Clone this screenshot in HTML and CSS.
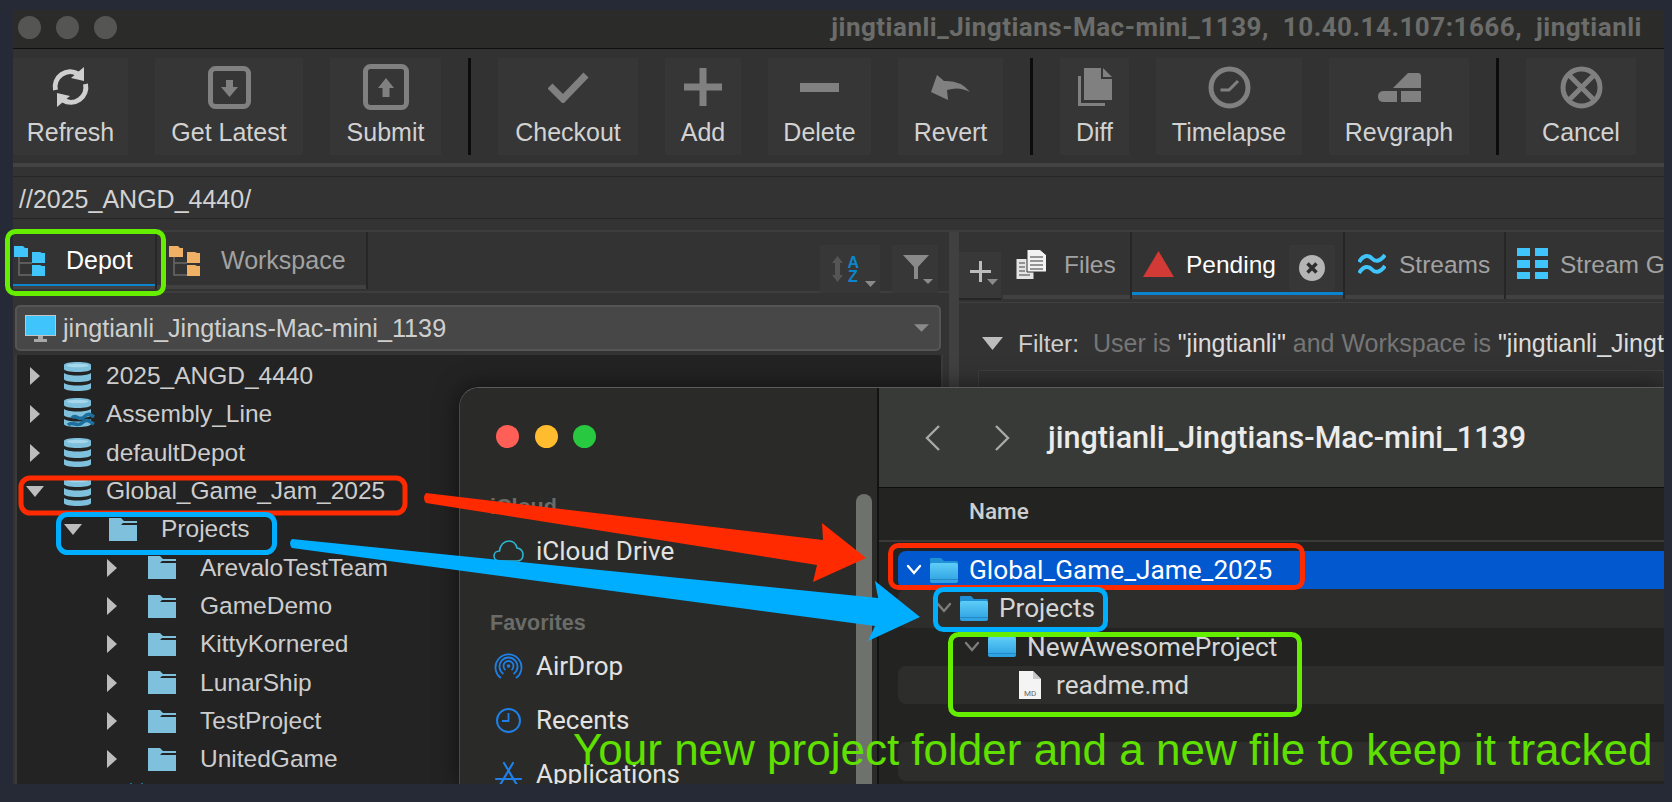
FILE: index.html
```html
<!DOCTYPE html>
<html lang="en">
<head>
    <meta charset="UTF-8">
    <title>Helix Visual Client and Finder</title>
    <link rel="stylesheet" href="styles.css">
</head>
<body>

<svg class="sprite" aria-hidden="true">
    <defs>
        <linearGradient id="macfolder" x1="0" y1="0" x2="0" y2="1">
            <stop offset="0" stop-color="#5fcdf8"/>
            <stop offset="1" stop-color="#2a9fe0"/>
        </linearGradient>
    </defs>
    <symbol id="folder" viewBox="0 0 28 23">
        <path fill="#7fc0dc" d="M0 0H12L15 3H28V5H14L12 7H28V23H0Z"/>
    </symbol>
    <symbol id="macfolder-icon" viewBox="0 0 28 25">
        <path fill="#1f8fd6" d="M1 0H11L14 3H27Q28 3 28 5V8H0V1Q0 0 1 0Z"/>
        <rect y="5" width="28" height="20" rx="2" fill="url(#macfolder)"/>
        <rect y="21" width="28" height="1" fill="#2488c8"/>
    </symbol>
    <symbol id="db" viewBox="0 0 27 29">
        <g fill="#7fc0dc">
            <path d="M0 3C0 1 6 0 13.500 0S27 1 27 3V7C27 9 21 10 13.500 10S0 9 0 7Z"/>
            <path d="M0 11C3 13 9 13.500 13.500 13.500S24 13 27 11V17C27 19 21 20 13.500 20S0 19 0 17Z"/>
            <path d="M0 21C3 23 9 23.500 13.500 23.500S24 23 27 21V26C27 28 21 29 13.500 29S0 28 0 26Z"/>
        </g>
        <ellipse cx="13.500" cy="3.500" rx="11" ry="1.800" fill="#a5d8ec"/>
    </symbol>
    <symbol id="treetab" viewBox="0 0 31 30">
        <path d="M5 10V29H18M5 17H18" fill="none" stroke="#6a6a6a" stroke-width="1.500"/>
        <path fill="currentColor" d="M0 0H9L11 2H14V11H0Z"/>
        <path fill="currentColor" d="M18 6H26L28 7H31V17H18Z"/>
        <path fill="currentColor" d="M18 19H26L28 20H31V30H18Z"/>
    </symbol>
    <symbol id="tri-right" viewBox="0 0 10 18"><path fill="#bdbdbd" d="M0 0L10 9L0 18Z"/></symbol>
    <symbol id="tri-down" viewBox="0 0 18 11"><path fill="#bdbdbd" d="M0 0H18L9 11Z"/></symbol>
    <symbol id="tri-small" viewBox="0 0 12 6"><path fill="#8a8a8a" d="M0 0H12L6 6Z"/></symbol>
    <symbol id="chev" viewBox="0 0 16 12"><path d="M2 2L8 9L14 2" fill="none" stroke="currentColor" stroke-width="2.400" stroke-linecap="round"/></symbol>
</svg>

<div class="stage">
<div class="window">
    <div class="titlebar">
        <span class="dot"></span><span class="dot"></span><span class="dot"></span>
        <span class="title">jingtianli_Jingtians-Mac-mini_1139,  10.40.14.107:1666,  jingtianli</span>
    </div>

    <div class="toolbar">
        <div class="tool tool-refresh">
            <span class="tool-icon">
                <svg width="39" height="42" viewBox="0 0 39 42">
                    <g fill="none" stroke="#cfcfcf" stroke-width="5">
                        <path d="M4.500 24A15 15 0 0 1 27 8"/>
                        <path d="M34.500 18A15 15 0 0 1 12 34"/>
                    </g>
                    <path fill="#cfcfcf" d="M33 1L33 15L20 12Z"/>
                    <path fill="#cfcfcf" d="M6 41L6 27L19 30Z"/>
                </svg>
            </span>
            <span class="tool-label">Refresh</span>
        </div>
        <div class="tool tool-latest">
            <span class="tool-icon">
                <svg width="43" height="43" viewBox="0 0 43 43">
                    <rect x="2.500" y="2.500" width="38" height="38" rx="5" fill="none" stroke="#808080" stroke-width="5"/>
                    <path fill="#808080" d="M18 14H25V21H30L21.500 31L13 21H18Z"/>
                </svg>
            </span>
            <span class="tool-label">Get Latest</span>
        </div>
        <div class="tool tool-submit">
            <span class="tool-icon">
                <svg width="46" height="46" viewBox="0 0 46 46">
                    <rect x="2.500" y="2.500" width="41" height="41" rx="5" fill="none" stroke="#808080" stroke-width="5"/>
                    <path fill="#808080" d="M19.500 33H26.500V24H31L23 14L15 24H19.500Z"/>
                </svg>
            </span>
            <span class="tool-label">Submit</span>
        </div>
        <span class="tool-sep"></span>
        <div class="tool tool-checkout">
            <span class="tool-icon">
                <svg width="41" height="31" viewBox="0 0 41 31"><path d="M2 14L15 27L38 3" fill="none" stroke="#808080" stroke-width="7"/></svg>
            </span>
            <span class="tool-label">Checkout</span>
        </div>
        <div class="tool tool-add">
            <span class="tool-icon">
                <svg width="38" height="38" viewBox="0 0 38 38"><path fill="#808080" d="M15.500 0H22.500V15.500H38V22.500H22.500V38H15.500V22.500H0V15.500H15.500Z"/></svg>
            </span>
            <span class="tool-label">Add</span>
        </div>
        <div class="tool tool-delete">
            <span class="tool-icon">
                <svg width="39" height="9" viewBox="0 0 39 9"><rect width="39" height="9" fill="#808080"/></svg>
            </span>
            <span class="tool-label">Delete</span>
        </div>
        <div class="tool tool-revert">
            <span class="tool-icon">
                <svg width="39" height="25" viewBox="0 0 39 25"><path fill="#808080" d="M6 0L0 17L17 25L16 15Q28 11 39 17Q30 5 13 6Z"/></svg>
            </span>
            <span class="tool-label">Revert</span>
        </div>
        <span class="tool-sep"></span>
        <div class="tool tool-diff">
            <span class="tool-icon">
                <svg width="34" height="38" viewBox="0 0 34 38">
                    <path fill="#808080" d="M6 0H23V11H34V32H6Z"/>
                    <path fill="#808080" d="M25 0L34 9H25Z"/>
                    <path fill="#808080" d="M0 8H3V35H27V38H0Z"/>
                </svg>
            </span>
            <span class="tool-label">Diff</span>
        </div>
        <div class="tool tool-timelapse">
            <span class="tool-icon">
                <svg width="43" height="43" viewBox="0 0 43 43">
                    <circle cx="21.500" cy="21.500" r="18.500" fill="none" stroke="#808080" stroke-width="5"/>
                    <path d="M12.500 24H21L30 15" fill="none" stroke="#808080" stroke-width="3"/>
                </svg>
            </span>
            <span class="tool-label">Timelapse</span>
        </div>
        <div class="tool tool-revgraph">
            <span class="tool-icon">
                <svg width="43" height="29" viewBox="0 0 43 29">
                    <path fill="#808080" d="M30 0H40Q43 0 43 3V15H15Z"/>
                    <path fill="#808080" d="M6 18H19V29H6Q0 29 0 23.500T6 18Z"/>
                    <rect x="23" y="18" width="20" height="11" fill="#808080"/>
                </svg>
            </span>
            <span class="tool-label">Revgraph</span>
        </div>
        <span class="tool-sep"></span>
        <div class="tool tool-cancel">
            <span class="tool-icon">
                <svg width="43" height="43" viewBox="0 0 43 43">
                    <circle cx="21.500" cy="21.500" r="18.500" fill="none" stroke="#808080" stroke-width="5"/>
                    <path d="M10 10L33 33M33 10L10 33" stroke="#808080" stroke-width="5"/>
                </svg>
            </span>
            <span class="tool-label">Cancel</span>
        </div>
    </div>

    <div class="grip"></div>
    <div class="pathbar">//2025_ANGD_4440/</div>

    <div class="panes">
        <div class="left-pane">
            <div class="left-tabs">
                <div class="ltab ltab-active">
                    <svg class="ltab-icon depot-blue" width="31" height="30"><use href="#treetab"/></svg>
                    <span>Depot</span>
                </div>
                <div class="ltab">
                    <svg class="ltab-icon ws-orange" width="31" height="30"><use href="#treetab"/></svg>
                    <span>Workspace</span>
                </div>
                <div class="sort-btn">
                    <svg width="44" height="34" viewBox="0 0 44 34">
                        <path fill="#555" d="M5.500 2L11 9H8V21H11L5.500 28L0 21H3V9H0Z"/>
                        <text x="15.500" y="14" class="az">A</text>
                        <text x="16" y="28" class="az">Z</text>
                        <path fill="#8a8a8a" d="M33 27H44L38.500 33Z"/>
                    </svg>
                </div>
                <div class="filter-btn">
                    <svg width="30" height="30" viewBox="0 0 30 30">
                        <path fill="#8a8a8a" d="M0 0H26L15 12V24H11V12Z"/>
                        <path fill="#8a8a8a" d="M20 24H30L25 29Z"/>
                    </svg>
                </div>
            </div>

            <div class="combo">
                <svg width="31" height="27" viewBox="0 0 31 27">
                    <rect x="0.500" y="0.500" width="30" height="20" fill="#3fc4fb" stroke="#c4c4c4"/>
                    <path fill="#a8a8a8" d="M13 21H18V24H22V27H9V24H13Z"/>
                </svg>
                <span class="combo-text">jingtianli_Jingtians-Mac-mini_1139</span>
                <svg class="combo-arrow" width="15" height="8"><use href="#tri-small"/></svg>
            </div>

            <div class="tree">
                <div class="tree-row depot-row">
                    <svg class="tree-arrow" width="10" height="18"><use href="#tri-right"/></svg>
                    <svg class="tree-icon" width="27" height="29"><use href="#db"/></svg>
                    <span>2025_ANGD_4440</span>
                </div>
                <div class="tree-row depot-row">
                    <svg class="tree-arrow" width="10" height="18"><use href="#tri-right"/></svg>
                    <svg class="tree-icon" width="31" height="32" viewBox="0 0 31 32">
                        <use href="#db" width="27" height="29"/>
                        <path d="M8 20C12 15 15 24 20 19S27 17 30 19M4 27C9 22 13 30 18 25S26 24 30 26" fill="none" stroke="#1d6f9e" stroke-width="3.500"/>
                    </svg>
                    <span class="after-wide">Assembly_Line</span>
                </div>
                <div class="tree-row depot-row">
                    <svg class="tree-arrow" width="10" height="18"><use href="#tri-right"/></svg>
                    <svg class="tree-icon" width="27" height="29"><use href="#db"/></svg>
                    <span>defaultDepot</span>
                </div>
                <div class="tree-row depot-row open">
                    <svg class="tree-arrow" width="18" height="11"><use href="#tri-down"/></svg>
                    <svg class="tree-icon" width="27" height="29"><use href="#db"/></svg>
                    <span>Global_Game_Jam_2025</span>
                </div>
                <div class="tree-row folder-row open level-2">
                    <svg class="tree-arrow" width="18" height="11"><use href="#tri-down"/></svg>
                    <svg class="tree-icon" width="28" height="23"><use href="#folder"/></svg>
                    <span>Projects</span>
                </div>
                <div class="tree-row folder-row level-3">
                    <svg class="tree-arrow" width="10" height="18"><use href="#tri-right"/></svg>
                    <svg class="tree-icon" width="28" height="23"><use href="#folder"/></svg>
                    <span>ArevaloTestTeam</span>
                </div>
                <div class="tree-row folder-row level-3">
                    <svg class="tree-arrow" width="10" height="18"><use href="#tri-right"/></svg>
                    <svg class="tree-icon" width="28" height="23"><use href="#folder"/></svg>
                    <span>GameDemo</span>
                </div>
                <div class="tree-row folder-row level-3">
                    <svg class="tree-arrow" width="10" height="18"><use href="#tri-right"/></svg>
                    <svg class="tree-icon" width="28" height="23"><use href="#folder"/></svg>
                    <span>KittyKornered</span>
                </div>
                <div class="tree-row folder-row level-3">
                    <svg class="tree-arrow" width="10" height="18"><use href="#tri-right"/></svg>
                    <svg class="tree-icon" width="28" height="23"><use href="#folder"/></svg>
                    <span>LunarShip</span>
                </div>
                <div class="tree-row folder-row level-3">
                    <svg class="tree-arrow" width="10" height="18"><use href="#tri-right"/></svg>
                    <svg class="tree-icon" width="28" height="23"><use href="#folder"/></svg>
                    <span>TestProject</span>
                </div>
                <div class="tree-row folder-row level-3">
                    <svg class="tree-arrow" width="10" height="18"><use href="#tri-right"/></svg>
                    <svg class="tree-icon" width="28" height="23"><use href="#folder"/></svg>
                    <span>UnitedGame</span>
                </div>
                <div class="tree-stub">
                    <svg width="15" height="3"><path d="M1 0V3M12 0V3" stroke="#1d6f9e" stroke-width="2"/></svg>
                </div>
            </div>
        </div>

        <div class="splitter"></div>

        <div class="right-pane">
            <div class="right-tabs">
                <div class="plus-tab">
                    <svg width="28" height="24" viewBox="0 0 28 24">
                        <path fill="#bcbcbc" d="M9 0H12V9H21V12H12V21H9V12H0V9H9Z"/>
                        <path fill="#8a8a8a" d="M17 18H28L22.500 24Z"/>
                    </svg>
                </div>
                <div class="rtab rtab-files">
                    <svg width="31" height="30" viewBox="0 0 31 30">
                        <rect x="0.500" y="10" width="17" height="20" fill="#e4e4e4"/>
                        <path fill="#f2f2f2" stroke="#333" d="M11 0.500H24L30.500 6V23H11Z"/>
                        <path d="M14 8H27M14 12H27M14 16H27M14 20H27M3 14H9M3 18H9M3 22H9M3 26H14" stroke="#777" stroke-width="1.500"/>
                    </svg>
                    <span class="rtab-text">Files</span>
                </div>
                <div class="rtab rtab-pending">
                    <svg width="31" height="26" viewBox="0 0 31 26"><path fill="#d13a35" d="M15.500 0L31 26H0Z"/></svg>
                    <span class="rtab-text">Pending</span>
                    <span class="close-box">
                        <svg width="26" height="26" viewBox="0 0 26 26">
                            <circle cx="13" cy="13" r="13" fill="#b5b5b5"/>
                            <path d="M8.500 8.500L17.500 17.500M17.500 8.500L8.500 17.500" stroke="#2e2e2e" stroke-width="3.500"/>
                        </svg>
                    </span>
                </div>
                <div class="rtab rtab-streams">
                    <svg width="28" height="22" viewBox="0 0 28 22">
                        <path d="M1 9C6 1 11 2 14 5.500S22 9 27 2M1 20C6 12 11 13 14 16.500S22 20 27 13" fill="none" stroke="#3fc4fb" stroke-width="4"/>
                    </svg>
                    <span class="rtab-text">Streams</span>
                </div>
                <div class="rtab rtab-graph">
                    <svg width="31" height="31" viewBox="0 0 31 31">
                        <g fill="#3fc4fb">
                            <rect width="13" height="8"/><rect x="18" width="13" height="8"/>
                            <rect y="12" width="13" height="8"/><rect x="18" y="12" width="13" height="8"/>
                            <rect y="24" width="13" height="7"/><rect x="18" y="24" width="13" height="7"/>
                        </g>
                    </svg>
                    <span class="rtab-text">Stream Graph</span>
                </div>
            </div>
            <div class="filter-row">
                <svg width="21" height="13"><use href="#tri-down"/></svg>
                <span class="filter-label">Filter:</span>
                <span class="filter-value">User is <b>"jingtianli"</b> and Workspace is <b>"jingtianli_Jingtians-Mac-mini_1139"</b></span>
            </div>
            <div class="changes-box"></div>
        </div>
    </div>

    <div class="finder">
        <div class="sidebar">
            <div class="lights">
                <span class="light light-red"></span><span class="light light-yellow"></span><span class="light light-green"></span>
            </div>
            <div class="side-head side-head-icloud">iCloud</div>
            <div class="side-item">
                <svg width="31" height="22" viewBox="0 0 31 22">
                    <path d="M7 21C3 21 1 18.500 1 16C1 13 3.500 11 6.500 11C7 5 11 1 16 1C20 1 23 4 24 8C27.500 8.500 30 11 30 15C30 18.500 27.500 21 24 21Z" fill="none" stroke="#2db5d5" stroke-width="1.600"/>
                </svg>
                <span>iCloud Drive</span>
            </div>
            <div class="side-head side-head-fav">Favorites</div>
            <div class="side-item">
                <svg width="31" height="26" viewBox="0 0 31 26">
                    <g fill="none" stroke="#1f7fe6" stroke-width="1.800">
                        <path d="M8 25A13 13 0 1 1 23 25"/>
                        <path d="M10.500 21A9 9 0 1 1 20.500 21"/>
                        <path d="M12.500 17A5 5 0 1 1 18.500 17"/>
                    </g>
                    <circle cx="15.500" cy="13" r="1.800" fill="#1f7fe6"/>
                </svg>
                <span>AirDrop</span>
            </div>
            <div class="side-item">
                <svg width="31" height="25" viewBox="0 0 31 25">
                    <circle cx="15.500" cy="12.500" r="11.500" fill="none" stroke="#1f7fe6" stroke-width="2"/>
                    <path d="M15.500 5V13H9" fill="none" stroke="#1f7fe6" stroke-width="1.800"/>
                </svg>
                <span>Recents</span>
            </div>
            <div class="side-item">
                <svg width="31" height="26" viewBox="0 0 31 26">
                    <path d="M11 2L24 24M20 2L7 24M3 18H28" fill="none" stroke="#1f7fe6" stroke-width="2.200" stroke-linecap="round"/>
                </svg>
                <span>Applications</span>
            </div>
            <div class="side-scroll"></div>
        </div>
        <div class="finder-main">
            <div class="finder-toolbar">
                <svg width="16" height="26" viewBox="0 0 16 26"><path d="M14 1L2 13L14 25" fill="none" stroke="#a8a8a8" stroke-width="2.400"/></svg>
                <svg class="nav-forward" width="16" height="26" viewBox="0 0 16 26"><path d="M2 1L14 13L2 25" fill="none" stroke="#a8a8a8" stroke-width="2.400"/></svg>
                <span class="finder-title">jingtianli_Jingtians-Mac-mini_1139</span>
            </div>
            <div class="finder-head">Name</div>
            <div class="file-list">
                <div class="file-row file-selected indent-1">
                    <svg class="file-chev chev-white" width="16" height="12"><use href="#chev"/></svg>
                    <svg class="file-icon" width="28" height="25"><use href="#macfolder-icon"/></svg>
                    <span>Global_Game_Jame_2025</span>
                </div>
                <div class="file-row file-alt indent-2">
                    <svg class="file-chev" width="16" height="12"><use href="#chev"/></svg>
                    <svg class="file-icon" width="28" height="25"><use href="#macfolder-icon"/></svg>
                    <span>Projects</span>
                </div>
                <div class="file-row indent-3">
                    <svg class="file-chev" width="16" height="12"><use href="#chev"/></svg>
                    <svg class="file-icon" width="28" height="21" viewBox="0 0 28 21" preserveAspectRatio="none"><use href="#macfolder-icon" width="28" height="25" y="-4"/></svg>
                    <span>NewAwesomeProject</span>
                </div>
                <div class="file-row file-alt indent-4">
                    <svg class="doc-icon" width="22" height="28" viewBox="0 0 22 28">
                        <path fill="#f4f4f4" d="M0 0H14L22 8V28H0Z"/>
                        <path fill="#c8c8c8" d="M14 0L22 8H14Z"/>
                        <text x="5" y="25" class="doc-tag">MD</text>
                    </svg>
                    <span>readme.md</span>
                </div>
                <div class="file-row"></div>
                <div class="file-row file-alt"></div>
            </div>
        </div>
    </div>
</div>

    <svg class="marks" viewBox="13 10 1651 774">
        <rect x="21" y="478" width="384" height="35" rx="9" class="mark-red"/>
        <rect x="58.500" y="514.500" width="216" height="38" rx="9" class="mark-blue"/>
        <rect x="7.500" y="231.500" width="156" height="62" rx="8" class="mark-green"/>
        <rect x="890.500" y="545.500" width="412" height="42" rx="8" class="mark-red"/>
        <rect x="935.500" y="589.500" width="170" height="40" rx="8" class="mark-blue"/>
        <rect x="950.500" y="634.500" width="349" height="80" rx="8" class="mark-green"/>
        <path fill="#ff2a00" d="M426 493L823 540L822 523L866 558L813 582L817 565L426 503Q422 498 426 493Z"/>
        <path fill="#00aeff" d="M292 539L878 598L875 581L920 617L868 641L875 626L292 548Q288 543 292 539Z"/>
    </svg>
    <div class="note">Your new project folder and a new file to keep it tracked</div>
</div>

</body>
</html>
```

FILE: styles.css
```css
* {
    box-sizing: border-box;
}
html, body {
    height: 100%;
}
body {
    margin: 0;
    padding: 10px 8px 18px 13px;
    background: #252a36;
    font-family: "Liberation Sans", Arial, sans-serif;
    overflow: hidden;
}
.sprite {
    position: absolute;
    width: 0;
    height: 0;
}
svg {
    display: block;
    flex: none;
}
.stage {
    position: relative;
    height: 774px;
}

.window {
    position: relative;
    height: 774px;
    background: #333;
    overflow: hidden;
    display: flex;
    flex-direction: column;
}

/* title bar */
.titlebar {
    flex: none;
    height: 39px;
    background: #2b2c29;
    border-bottom: 1px solid #101010;
    display: flex;
    align-items: center;
    padding: 0 22px 4px 5px;
    gap: 15px;
}
.dot {
    width: 23px;
    height: 23px;
    border-radius: 50%;
    background: #555653;
}
.title {
    margin-left: auto;
    white-space: pre;
    font-family: Roboto, sans-serif;
    font-weight: 700;
    font-size: 26px;
    letter-spacing: 0.5px;
    color: #6c6d6b;
}

/* toolbar */
.toolbar {
    flex: none;
    height: 114px;
    padding-top: 9px;
    display: flex;
    align-items: flex-start;
    gap: 27px;
    background: #323232;
}
.tool {
    height: 97px;
    padding-top: 4px;
    background: #363636;
    display: flex;
    flex-direction: column;
    align-items: center;
}
.tool-refresh { width: 115px; }
.tool-latest { width: 148px; }
.tool-submit { width: 111px; }
.tool-checkout { width: 140px; }
.tool-add { width: 76px; }
.tool-delete { width: 103px; }
.tool-revert { width: 105px; }
.tool-diff { width: 69px; }
.tool-timelapse { width: 146px; }
.tool-revgraph { width: 140px; }
.tool-cancel { width: 110px; }
.tool-icon {
    height: 50px;
    display: flex;
    align-items: center;
    justify-content: center;
}
.tool-label {
    margin-top: 6px;
    font-size: 25px;
    line-height: 28px;
    color: #d2d2d2;
    white-space: nowrap;
}
.tool-sep {
    width: 3px;
    height: 97px;
    background: #0c0c0c;
}
.grip {
    flex: none;
    height: 4px;
    background: #434343;
    margin-bottom: 9px;
}
.pathbar {
    flex: none;
    height: 43px;
    padding-left: 6px;
    border-top: 1px solid #262626;
    border-bottom: 1px solid #262626;
    font-size: 25px;
    line-height: 45px;
    color: #d2d2d2;
}

/* panes */
.panes {
    flex: 1;
    min-height: 0;
    margin-top: 11px;
    border-top: 2px solid #3d3d3d;
    display: flex;
}
.left-pane {
    width: 936px;
    flex: none;
    display: flex;
    flex-direction: column;
    min-height: 0;
}
.left-tabs {
    flex: none;
    height: 61px;
    display: flex;
    border-bottom: 2px solid #3d3d3d;
}
.ltab {
    flex: none;
    display: flex;
    align-items: center;
    height: 57px;
    padding-left: 1px;
    font-size: 25px;
    color: #a2a2a2;
    border-right: 2px solid #262626;
    background: #333;
    box-shadow: inset 0 -4px 0 #414141;
}
.ltab:first-child {
    width: 144px;
    color: #fff;
    box-shadow: inset 0 -3px 0 #414141, inset 0 -5px 0 #0a84cf;
}
.ltab:nth-child(2) {
    width: 211px;
    padding-left: 12px;
}
.ltab-icon {
    margin: 0 21px 0 0;
}
.depot-blue {
    color: #3fc4fb;
}
.ws-orange {
    color: #f0b066;
}
.sort-btn, .filter-btn {
    height: 48px;
    margin-top: 13px;
    background: #373737;
}
.sort-btn {
    margin-left: auto;
    width: 60px;
    padding: 9px 0 0 12px;
}
.filter-btn {
    width: 46px;
    margin-left: 12px;
    margin-right: 11px;
    padding: 10px 0 0 11px;
}
.az {
    font-size: 16px;
    font-weight: 700;
    fill: #0b86cc;
}
.combo {
    flex: none;
    height: 46px;
    margin: 12px 8px 4px 2px;
    padding-left: 8px;
    display: flex;
    align-items: center;
    gap: 7px;
    border: 2px solid #555;
    border-radius: 5px;
    background: #474747;
    font-size: 25.200px;
    color: #cfcfcf;
}
.combo-text {
    white-space: nowrap;
}
.combo-arrow {
    margin-left: auto;
    margin-right: 10px;
}
.tree {
    flex: 1;
    min-height: 0;
    overflow: hidden;
    margin: 0 6px 0 2px;
    padding-top: 2px;
    background: #232323;
    border: 2px solid #3a3a3a;
    border-width: 0 2px;
}
.tree-row {
    height: 38.330px;
    display: flex;
    align-items: center;
    font-size: 24.500px;
    color: #cdcdcd;
    white-space: nowrap;
}
.tree-arrow {
    margin-left: 13px;
}
.tree-row.open .tree-arrow {
    margin-left: 9px;
}
.depot-row .tree-icon {
    margin-left: 24px;
    margin-right: 15px;
}
.depot-row.open .tree-icon {
    margin-left: 20px;
}
.depot-row .after-wide {
    margin-left: -4px;
}
.folder-row .tree-icon {
    margin-left: 31px;
    margin-right: 24px;
}
.folder-row.open .tree-icon {
    margin-left: 27px;
}
.level-2 {
    padding-left: 38px;
}
.level-3 {
    padding-left: 77px;
}
.tree-stub {
    padding: 4px 0 0 113px;
}

.splitter {
    flex: none;
    width: 10px;
    background: #404040;
}

.right-pane {
    flex: 1;
    min-width: 0;
    overflow: hidden;
}
.right-tabs {
    height: 71px;
    display: flex;
    border-bottom: 1px solid #3f3f3f;
    white-space: nowrap;
}
.plus-tab {
    flex: none;
    width: 42px;
    height: 48px;
    margin-top: 20px;
    padding: 9px 0 0 11px;
    background: #383838;
    border-bottom: 2px solid #262626;
    margin-right: 2px;
}
.rtab {
    flex: none;
    height: 67px;
    display: flex;
    align-items: center;
    padding-bottom: 4px;
    font-size: 24.500px;
    color: #a2a2a2;
    border-right: 2px solid #262626;
    box-shadow: inset 0 -4px 0 #414141;
}
.rtab-text {
    margin-top: 3px;
}
.rtab-files {
    width: 129px;
    padding-left: 13px;
    gap: 17px;
}
.rtab-pending {
    width: 213px;
    padding-left: 11px;
    gap: 12px;
    color: #fff;
    box-shadow: inset 0 -4px 0 #414141, inset 0 -7px 0 #0a84cf;
}
.close-box {
    width: 46px;
    height: 46px;
    margin-top: 9px;
    margin-left: 1px;
    padding: 10px 0 0 10px;
    background: #373737;
}
.rtab-streams {
    width: 161px;
    padding-left: 13px;
    gap: 13px;
}
.rtab-graph {
    padding-left: 11px;
    gap: 12px;
    border-right: none;
    flex: 1 0 auto;
}
.filter-row {
    height: 67px;
    display: flex;
    align-items: center;
    padding: 14px 0 0 23px;
    white-space: nowrap;
}
.filter-label {
    margin-left: 15px;
    font-size: 24.400px;
    color: #cfcfcf;
}
.filter-value {
    margin-left: 14px;
    font-size: 25px;
    color: #767676;
}
.filter-value b {
    font-weight: 400;
    color: #dcdcdc;
}
.changes-box {
    margin-left: 19px;
    height: 30px;
    background: #313131;
    border: 1px solid #3e3e3e;
}

/* finder window on top */
.finder {
    position: absolute;
    left: 446px;
    top: 377px;
    right: 0;
    bottom: 0;
    display: flex;
    background: #232422;
    border-top: 1px solid #5c5c5c;
    border-left: 1px solid #4a4a4a;
    border-top-left-radius: 20px;
    box-shadow: 0 0 24px rgba(0, 0, 0, 0.55);
    overflow: hidden;
}
.sidebar {
    position: relative;
    flex: none;
    width: 419px;
    padding: 37px 0 0 33px;
    background: #2a2b28;
    border-right: 2px solid #131313;
    overflow: hidden;
}
.lights {
    display: flex;
    gap: 15.500px;
    margin-left: 3px;
}
.light {
    width: 23px;
    height: 23px;
    border-radius: 50%;
}
.light-red {
    background: #ff5f57;
}
.light-yellow {
    background: #febc2e;
}
.light-green {
    background: #28c840;
}
.side-head {
    margin-left: -3px;
    font-size: 21.500px;
    line-height: 24px;
    font-weight: 700;
    color: #6b6c69;
}
.side-head-icloud {
    margin-top: 47px;
    margin-bottom: 17px;
}
.side-head-fav {
    margin-top: 45px;
    margin-bottom: 16px;
}
.side-item {
    height: 30px;
    margin-bottom: 24px;
    display: flex;
    align-items: center;
    gap: 12px;
    font-family: Roboto, sans-serif;
    font-size: 26px;
    color: #e2e2e2;
}
.side-scroll {
    position: absolute;
    top: 106px;
    right: 5px;
    width: 16px;
    height: 400px;
    border-radius: 8px;
    background: #6f716d;
}
.finder-main {
    flex: 1;
    min-width: 0;
}
.finder-toolbar {
    height: 100px;
    padding-left: 46px;
    display: flex;
    align-items: center;
    background: #383a37;
    border-bottom: 1px solid #0e0e0e;
}
.nav-forward {
    margin-left: 53px;
}
.finder-title {
    margin-left: 38px;
    font-family: Roboto, sans-serif;
    font-weight: 500;
    font-size: 30.500px;
    color: #ebebeb;
    white-space: nowrap;
}
.finder-head {
    height: 54px;
    padding: 10px 0 0 90px;
    border-bottom: 2px solid #3a3b38;
    font-family: Roboto, sans-serif;
    font-weight: 500;
    font-size: 22.500px;
    color: #cfcfcf;
}
.file-list {
    padding: 9px 0 0 19px;
}
.file-row {
    height: 38.300px;
    display: flex;
    align-items: center;
    font-family: Roboto, sans-serif;
    font-size: 26.200px;
    color: #d6d6d6;
    border-radius: 8px 0 0 8px;
    white-space: nowrap;
}
.file-alt {
    background: #2d2e2b;
}
.file-selected {
    background: #0258cf;
    color: #fff;
}
.file-chev {
    color: #7d7d7d;
    margin-right: 8px;
}
.chev-white {
    color: #fff;
}
.file-icon {
    margin-right: 11px;
}
.indent-1 {
    padding-left: 8px;
}
.indent-2 {
    padding-left: 38px;
}
.indent-3 {
    padding-left: 66px;
}
.indent-4 {
    padding-left: 121px;
}
.doc-icon {
    margin-right: 15px;
}
.doc-tag {
    font-size: 8px;
    fill: #666;
}

/* annotations */
.marks {
    position: absolute;
    left: 0;
    top: 0;
    width: 1651px;
    height: 774px;
    overflow: visible;
    pointer-events: none;
}
.mark-red, .mark-blue, .mark-green {
    fill: none;
    stroke-width: 5;
}
.mark-red {
    stroke: #ff2a00;
}
.mark-blue {
    stroke: #00aeff;
}
.mark-green {
    stroke: #66ee00;
}
.note {
    position: absolute;
    left: 560px;
    top: 716px;
    font-size: 44px;
    line-height: 48px;
    color: #5fe000;
    white-space: nowrap;
}
```
